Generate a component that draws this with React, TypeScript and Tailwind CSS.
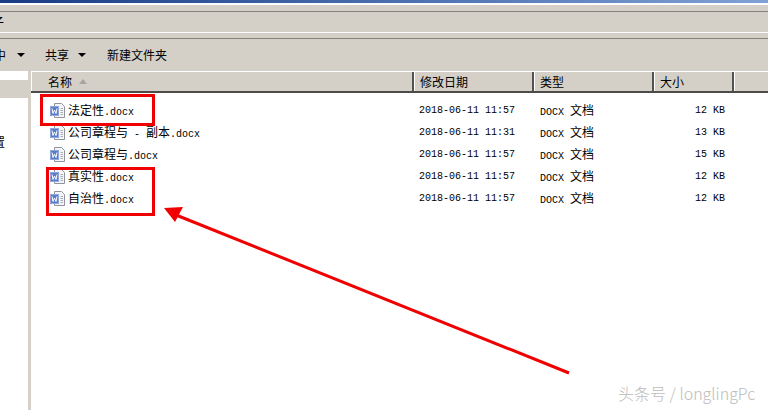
const files = [
  { name: "法定性.docx", date: "2018-06-11 11:57", size: "12 KB" },
  { name: "公司章程与 - 副本.docx", date: "2018-06-11 11:31", size: "13 KB" },
  { name: "公司章程与.docx", date: "2018-06-11 11:57", size: "15 KB" },
  { name: "真实性.docx", date: "2018-06-11 11:57", size: "12 KB" },
  { name: "自治性.docx", date: "2018-06-11 11:57", size: "12 KB" },
];

// SimSun look: half width latin next to 12px hanzi
function Mixed({ text }: { text: string }) {
  const parts = text.match(/[\u4e00-\u9fff]+|[^\u4e00-\u9fff]+/g) ?? [];
  return (
    <span className="text-[12px] leading-[14px]">
      {parts.map((p, i) =>
        /[\u4e00-\u9fff]/.test(p) ? (
          <span key={i} className="text-[12px] leading-[14px]">{p}</span>
        ) : (
          <span key={i} className="text-[10px] leading-[14px] whitespace-pre font-['Liberation_Mono',monospace]">{p}</span>
        ),
      )}
    </span>
  );
}

function WordIcon() {
  return (
    <svg width="17" height="17" viewBox="0 0 17 17" className="shrink-0">
      <path d="M5.5 1.5h7l3 3v11h-10z" fill="#f4f5f8" stroke="#8f939b" />
      <path d="M11.5 6.5h2.5M11.5 8.5h2.5M11.5 10.5h2.5M11.5 12.5h2.5" stroke="#a9adb5" fill="none" />
      <rect x="1" y="4" width="9" height="10" fill="#5b7cc8" />
      <rect x="1.5" y="4.5" width="8" height="9" fill="none" stroke="#8ea6dc" />
      <path d="M3 6.5l1 5 1.5-3.5 1.5 3.5 1-5" fill="none" stroke="#fff" />
    </svg>
  );
}

function Caret() {
  return <span className="w-0 h-0 border-x-[4px] border-x-transparent border-t-[4px] border-t-black" />;
}

function HeaderCell({ label, className }: { label: string; className: string }) {
  return (
    <div className={`flex items-center border-r-2 border-r-[#55534f] border-l border-l-white pl-[5px] text-[12px] ${className}`}>
      {label}
    </div>
  );
}

export default function App() {
  return (
    <div className="relative w-[768px] h-[410px] overflow-hidden bg-white text-black font-['Noto_Sans_CJK_SC','Liberation_Sans',sans-serif]">
      {/* window title strip */}
      <div className="h-[3px] bg-gradient-to-r from-[#1a3b85] to-[#7fa2d6]" />
      <div className="h-[2px] bg-white" />
      <div className="h-[7px] bg-[#d4d0c8] border-b border-b-[#85837e]" />

      {/* menu bar */}
      <div className="h-[21px] bg-[#d4d0c8] border-b border-b-white overflow-hidden flex items-center">
        <span className="ml-[-8px] text-[12px] leading-none">子</span>
      </div>
      <div className="h-[6px] bg-[#d4d0c8] border-b border-b-[#85837e]" />

      {/* toolbar */}
      <div className="h-[32px] bg-[#d4d0c8] flex items-center text-[12px] overflow-hidden">
        <span className="ml-[-6px]">中</span>
        <span className="ml-[11px] flex"><Caret /></span>
        <span className="ml-[20px]">共享</span>
        <span className="ml-[9px] flex"><Caret /></span>
        <span className="ml-[21px]">新建文件夹</span>
      </div>

      <div className="flex h-[339px]">
        {/* nav pane, cut off at the left */}
        <div className="w-[28px] shrink-0 bg-white overflow-hidden">
          <div className="h-[9px]" />
          <div className="h-[18px] bg-[#d4d0c8]" />
          <div className="mt-[38px] ml-[-7px] text-[12px] leading-none">置</div>
        </div>
        <div className="w-[3px] shrink-0 bg-[#d4d0c8]" />

        {/* file list */}
        <div className="flex-1 min-w-0">
          <div className="flex h-[22px] bg-[#d4d0c8] border-b-2 border-b-[#4c4b48] border-t border-t-white">
            <div className="w-[383px] flex items-center border-r-2 border-r-[#55534f] border-l border-l-white pl-[16px] text-[12px]">
              名称
              <span className="ml-[7px] w-0 h-0 border-x-[4px] border-x-transparent border-b-[5px] border-b-[#a8a6a1]" />
            </div>
            <HeaderCell label="修改日期" className="w-[120px]" />
            <HeaderCell label="类型" className="w-[120px]" />
            <HeaderCell label="大小" className="w-[80px]" />
            <div className="flex-1 border-l border-l-white" />
          </div>

          <div className="pt-[6px]">
            {files.map((f) => (
              <div key={f.name} className="flex items-center h-[22px]">
                <div className="w-[382px] flex items-center gap-[2px] pl-[18px] whitespace-nowrap">
                  <WordIcon />
                  <div className="leading-[14px]"><Mixed text={f.name} /></div>
                </div>
                <div className="w-[121px] pl-[6px] pt-[2px] text-[10px] leading-[14px] font-['Liberation_Mono',monospace]">{f.date}</div>
                <div className="w-[119px] pl-[6px] leading-[14px]"><Mixed text="DOCX 文档" /></div>
                <div className="w-[72px] pt-[2px] text-right text-[10px] leading-[14px] font-['Liberation_Mono',monospace]">{f.size}</div>
              </div>
            ))}
          </div>
        </div>
      </div>

      {/* red annotations */}
      <div className="absolute left-[40px] top-[94px] w-[115px] h-[32px] border-[3px] border-[#f00000]" />
      <div className="absolute left-[46px] top-[167px] w-[109px] h-[49px] border-[3px] border-[#f00000]" />
      <svg className="absolute left-0 top-0 pointer-events-none" width="768" height="410">
        <line x1="569" y1="373" x2="176" y2="215" stroke="#f00000" strokeWidth="3" />
        <path d="M164 208L183 207L175 222Z" fill="#f00000" />
      </svg>

      {/* watermark */}
      <div className="absolute left-[618px] top-[383px] text-[16px] leading-[20px] text-[#bcbcbc] whitespace-nowrap font-['Noto_Sans_CJK_SC',sans-serif] font-light">
        头条号 / longlingPc
      </div>
    </div>
  );
}
